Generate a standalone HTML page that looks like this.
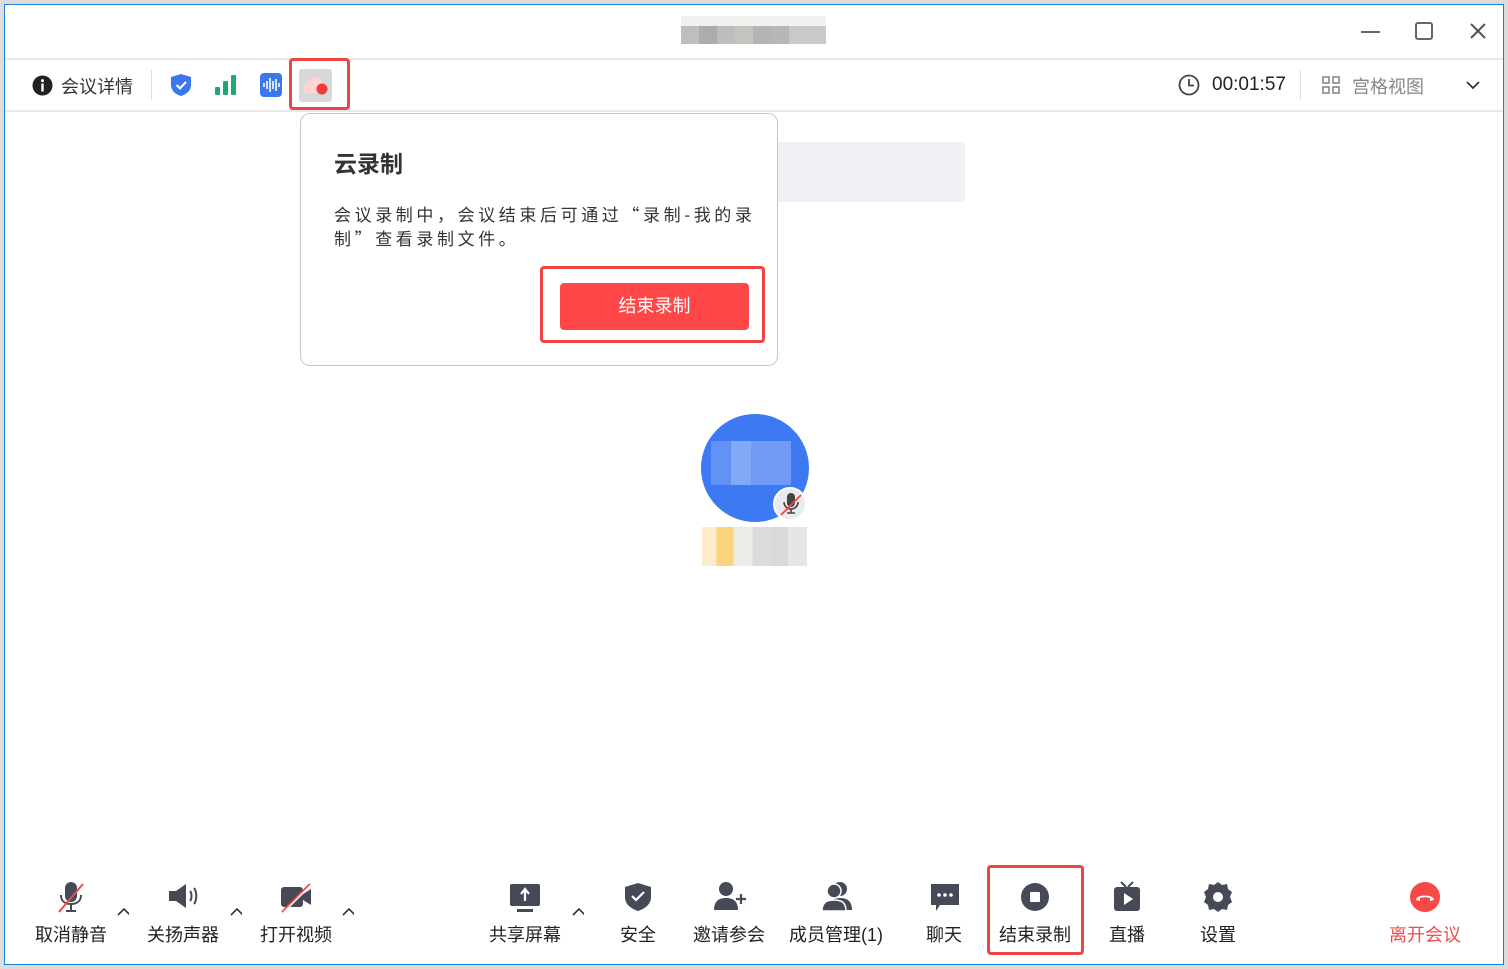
<!DOCTYPE html>
<html><head><meta charset="utf-8"><style>
*{margin:0;padding:0;box-sizing:border-box}
body{width:1508px;height:969px;background:#dcdcdc;position:relative;overflow:hidden;font-family:"Liberation Sans","Noto Sans CJK SC",sans-serif;color:#333}
.win{position:absolute;left:4px;top:4px;width:1500px;height:961px;background:#fff;border:1px solid #1a7fd6}
.abs{position:absolute}
.t{font-size:18px;color:#333;white-space:nowrap}
.item{position:absolute;top:0;width:120px;text-align:center}
.item svg{position:absolute;left:44px;top:880px}
.item .l{position:absolute;top:921px;left:0;width:120px;text-align:center;font-size:18px;color:#222}
.caret{position:absolute;top:906px;width:12px;height:12px}
</style></head><body>
<div class="win"></div>
<div class="abs" style="left:681px;top:16px;width:145px;height:10px;background:#f1f1f0"></div>
<div class="abs" style="left:681px;top:26px;width:145px;height:18px;background:linear-gradient(90deg,#bfbebd 0 18px,#aeacab 18px 36px,#bdbdbc 36px 54px,#c6c4c1 54px 72px,#b3b4b7 72px 90px,#b9b7b5 90px 108px,#c8c9ca 108px 145px)"></div>
<div class="abs" style="left:1361px;top:31px;width:19px;height:2px;background:#666"></div>
<div class="abs" style="left:1415px;top:22px;width:18px;height:18px;border:2px solid #666;border-radius:3px"></div>
<svg class="abs" style="left:1469px;top:22px" width="18" height="18"><path d="M2 2L16 16M16 2L2 16" stroke="#555" stroke-width="2"/></svg>
<div class="abs" style="left:5px;top:58px;width:1498px;height:2px;background:#e8e8f0"></div>
<div class="abs" style="left:5px;top:110px;width:1498px;height:2px;background:#e8e8f0"></div>
<svg class="abs" style="left:32px;top:75px" width="21" height="21"><circle cx="10.5" cy="10.5" r="10" fill="#222"/><rect x="9.3" y="8.5" width="2.4" height="8" fill="#fff"/><circle cx="10.5" cy="5.6" r="1.5" fill="#fff"/></svg>
<div class="abs t" style="left:61px;top:73px">会议详情</div>
<div class="abs" style="left:151px;top:70px;width:1px;height:30px;background:#ddd"></div>
<svg class="abs" style="left:170px;top:73px" width="22" height="24"><path d="M11 1L21 4V12C21 18 16 21.5 11 23C6 21.5 1 18 1 12V4Z" fill="#3b77f0"/><path d="M6.5 12L10 15.3L16 9" stroke="#fff" stroke-width="2.2" fill="none"/></svg>
<svg class="abs" style="left:215px;top:75px" width="22" height="20"><rect x="0" y="12" width="5" height="8" rx="1" fill="#1aab6d"/><rect x="8" y="6" width="5" height="14" rx="1" fill="#1aab6d"/><rect x="16" y="0" width="5" height="20" rx="1" fill="#1aab6d"/></svg>
<svg class="abs" style="left:260px;top:73px" width="22" height="24"><rect x="0" y="0" width="22" height="24" rx="4" fill="#3b77f0"/><path d="M4 10v4M7 8v8M10 5v14M13 8v8M16 6v12M19 10v4" stroke="#fff" stroke-width="1.6"/></svg>
<div class="abs" style="left:289px;top:58px;width:61px;height:52px;border:3px solid #ef4444;border-radius:4px"></div>
<div class="abs" style="left:299px;top:69px;width:33px;height:33px;background:#d8d8d8;border-radius:3px"></div>
<svg class="abs" style="left:302px;top:75px" width="30" height="24"><path d="M6 18C2 18 1 15 1 13C1 10 3 8 6 8C7 4 10 2 13 2C17 2 20 5 20 9C23 9 24 12 24 14C24 16 22 18 20 18Z" fill="#fdd5d5"/><circle cx="20" cy="14" r="5.5" fill="#ef3b3b"/></svg>
<svg class="abs" style="left:1178px;top:74px" width="22" height="22"><circle cx="11" cy="11" r="9.5" stroke="#444" stroke-width="1.8" fill="none"/><path d="M11 5V11.5H16" stroke="#444" stroke-width="1.8" fill="none"/></svg>
<div class="abs t" style="left:1212px;top:74px;font-size:19px;color:#222">00:01:57</div>
<div class="abs" style="left:1300px;top:70px;width:1px;height:30px;background:#ddd"></div>
<svg class="abs" style="left:1322px;top:76px" width="18" height="18" fill="none" stroke="#888" stroke-width="1.6"><rect x="1" y="1" width="6" height="6"/><rect x="11" y="1" width="6" height="6"/><rect x="1" y="11" width="6" height="6"/><rect x="11" y="11" width="6" height="6"/></svg>
<div class="abs t" style="left:1352px;top:73px;color:#888">宫格视图</div>
<svg class="abs" style="left:1465px;top:79px" width="16" height="12"><path d="M2 3L8 9L14 3" stroke="#333" stroke-width="1.8" fill="none"/></svg>
<div class="abs" style="left:760px;top:142px;width:205px;height:60px;background:#f0f1f4;border-radius:3px"></div>
<div class="abs" style="left:300px;top:113px;width:478px;height:253px;background:#fff;border:1px solid #c8c8c8;border-radius:10px"></div>
<div class="abs" style="left:334px;top:145px;font-size:23px;font-weight:bold;color:#333">云录制</div>
<div class="abs" style="left:334px;top:202px;width:440px;font-family:'Noto Sans CJK SC',sans-serif;font-size:17px;line-height:24px;color:#333;letter-spacing:3.6px">会议录制中，会议结束后可通过“录制-我的录制”查看录制文件。</div>
<div class="abs" style="left:540px;top:266px;width:225px;height:77px;border:3px solid #ef4444;border-radius:4px"></div>
<div class="abs" style="left:560px;top:283px;width:189px;height:47px;background:#ff4747;border-radius:4px;color:#fff;font-size:18px;text-align:center;line-height:47px">结束录制</div>
<div class="abs" style="left:701px;top:414px;width:108px;height:108px;border-radius:50%;background:#3d79f2"></div>
<div class="abs" style="left:711px;top:441px;width:80px;height:44px;background:linear-gradient(90deg,#6b98f5 0 25%,#94b5f9 25% 50%,#7ca3f7 50% 100%);opacity:.8"></div>
<div class="abs" style="left:773px;top:487px;width:34px;height:34px;border-radius:50%;background:#e9eaf0;border:2px solid #fff"></div>
<svg class="abs" style="left:779px;top:491px" width="24" height="26"><rect x="8" y="2" width="8" height="14" rx="4" fill="#444"/><path d="M5 11C5 15 8 18 12 18C16 18 19 15 19 11M12 18V22M8 22H16" stroke="#444" stroke-width="1.6" fill="none"/><path d="M2 24L22 4" stroke="#f04848" stroke-width="1.8"/></svg>
<div class="abs" style="left:702px;top:527px;width:105px;height:39px;background:linear-gradient(90deg,#fcecc9 0 14%,#fad47d 14% 30%,#ecebe8 30% 48%,#dcdcdc 48% 66%,#d9d9d9 66% 82%,#e6e6e6 82%)"></div>
<div class="item" style="left:11px"><svg width="32" height="34"><rect x="10" y="2" width="12" height="20" rx="6" fill="#464a56"/><path d="M6 15C6 21 10 24 16 24C22 24 26 21 26 15M16 24V30M11 31H21" stroke="#464a56" stroke-width="2" fill="none"/><path d="M4 32L28 4" stroke="#f04848" stroke-width="2"/></svg><div class="l">取消静音</div></div>
<div class="item" style="left:123px"><svg width="34" height="34"><path d="M2 11H9L19 4V28L9 21H2Z" fill="#464a56"/><path d="M23 11C25 13 25 19 23 21M27 8C30 12 30 20 27 24" stroke="#464a56" stroke-width="2" fill="none"/></svg><div class="l">关扬声器</div></div>
<div class="item" style="left:236px"><svg width="34" height="34"><rect x="1" y="7" width="22" height="20" rx="3" fill="#464a56"/><path d="M23 14L31 9V25L23 20Z" fill="#464a56"/><path d="M2 32L30 4" stroke="#f04848" stroke-width="2"/><path d="M4 32L32 4" stroke="#fff" stroke-width="1.5"/></svg><div class="l">打开视频</div></div>
<div class="item" style="left:465px"><svg width="34" height="34"><rect x="1" y="4" width="30" height="22" rx="2" fill="#464a56"/><path d="M16 21V11M12 14L16 9L20 14" stroke="#fff" stroke-width="2.2" fill="none"/><rect x="8" y="29" width="16" height="3" fill="#464a56"/></svg><div class="l">共享屏幕</div></div>
<div class="item" style="left:578px"><svg width="34" height="34"><path d="M16 3L29 7V17C29 25 22 29 16 31C10 29 3 25 3 17V7Z" fill="#464a56"/><path d="M10 16L14 20L22 12" stroke="#fff" stroke-width="2.2" fill="none"/></svg><div class="l">安全</div></div>
<div class="item" style="left:669px"><svg width="36" height="34"><circle cx="13" cy="9" r="7" fill="#464a56"/><path d="M1 30C1 21 6 18 13 18C20 18 25 21 25 30Z" fill="#464a56"/><path d="M28 14V24M23 19H33" stroke="#464a56" stroke-width="2.2"/></svg><div class="l">邀请参会</div></div>
<div class="item" style="left:776px;width:120px"><svg width="36" height="34"><circle cx="20" cy="9" r="7" fill="#464a56"/><path d="M8 30C8 21 13 18 20 18C27 18 32 21 32 30Z" fill="#464a56"/><circle cx="14" cy="11" r="7" fill="#464a56" stroke="#fff" stroke-width="1.5"/><path d="M2 31C2 22 7 20 14 20C21 20 26 22 26 31Z" fill="#464a56" stroke="#fff" stroke-width="1.5"/></svg><div class="l">成员管理(1)</div></div>
<div class="item" style="left:884px"><svg width="34" height="34"><path d="M3 4H31V25H12L8 31V25H3Z" fill="#464a56"/><circle cx="11" cy="15" r="1.8" fill="#fff"/><circle cx="17" cy="15" r="1.8" fill="#fff"/><circle cx="23" cy="15" r="1.8" fill="#fff"/></svg><div class="l">聊天</div></div>
<div class="item" style="left:975px"><svg width="34" height="34"><ellipse cx="16" cy="17" rx="14" ry="14" fill="#464a56"/><rect x="11" y="12" width="10" height="10" rx="1" fill="#fff"/></svg><div class="l">结束录制</div></div>
<div class="abs" style="left:987px;top:865px;width:97px;height:90px;border:3px solid #ef4444;border-radius:4px"></div>
<div class="item" style="left:1067px"><svg width="34" height="34"><path d="M10 2L15 7M22 2L17 7" stroke="#464a56" stroke-width="2"/><rect x="3" y="7" width="26" height="24" rx="3" fill="#464a56"/><path d="M13 13V25L22 19Z" fill="#fff"/></svg><div class="l">直播</div></div>
<div class="item" style="left:1158px"><svg width="34" height="34"><path d="M16 2L20 5L25 4L26 9L30 12L28 17L30 22L26 25L25 30L20 29L16 32L12 29L7 30L6 25L2 22L4 17L2 12L6 9L7 4L12 5Z" fill="#464a56"/><circle cx="16" cy="17" r="5" fill="#fff"/></svg><div class="l">设置</div></div>
<div class="item" style="left:1365px"><svg width="34" height="34"><circle cx="16" cy="17" r="15" fill="#f84848"/><path d="M7 20C7 14 25 14 25 20L21 21V18C18 17 14 17 11 18V21Z" fill="#fff"/></svg><div class="l" style="color:#f84848">离开会议</div></div>
<svg class="caret" style="left:117px" width="14" height="12"><path d="M1 9L7 3L13 9" stroke="#333" stroke-width="1.6" fill="none"/></svg>
<svg class="caret" style="left:230px" width="14" height="12"><path d="M1 9L7 3L13 9" stroke="#333" stroke-width="1.6" fill="none"/></svg>
<svg class="caret" style="left:342px" width="14" height="12"><path d="M1 9L7 3L13 9" stroke="#333" stroke-width="1.6" fill="none"/></svg>
<svg class="caret" style="left:572px" width="14" height="12"><path d="M1 9L7 3L13 9" stroke="#333" stroke-width="1.6" fill="none"/></svg>
</body></html>
